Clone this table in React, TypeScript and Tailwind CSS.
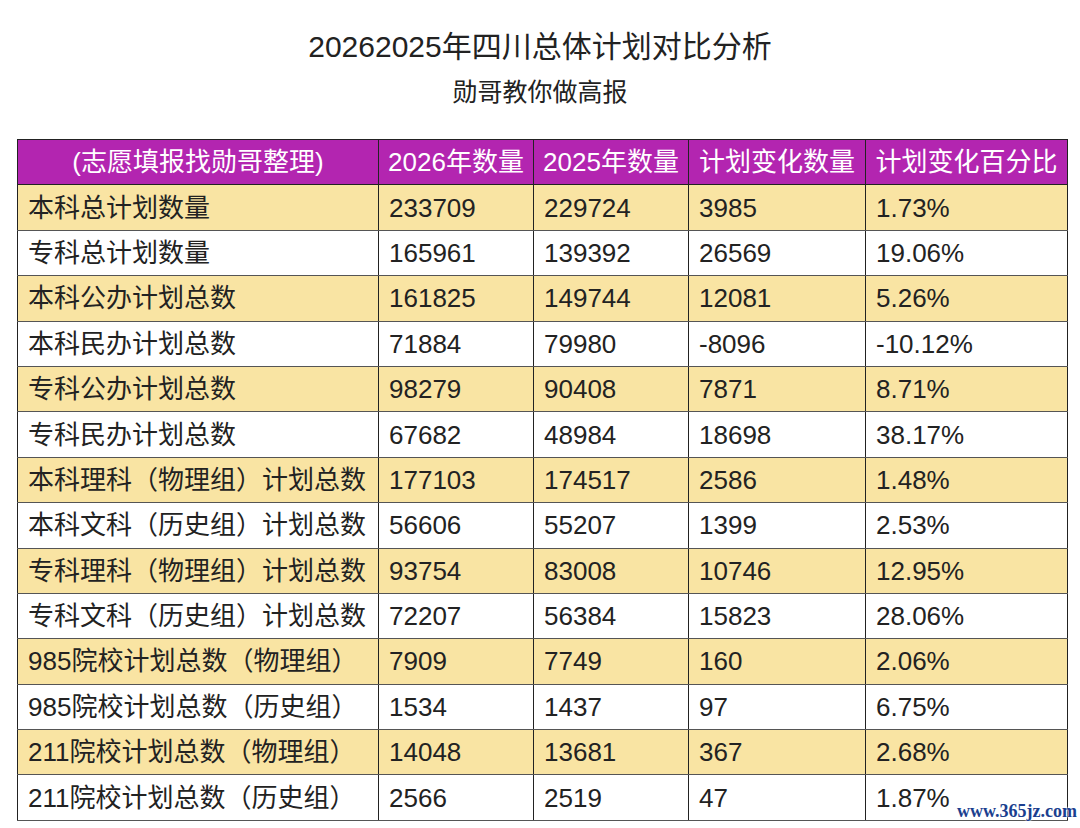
const rows = [
  ["本科总计划数量", "233709", "229724", "3985", "1.73%"],
  ["专科总计划数量", "165961", "139392", "26569", "19.06%"],
  ["本科公办计划总数", "161825", "149744", "12081", "5.26%"],
  ["本科民办计划总数", "71884", "79980", "-8096", "-10.12%"],
  ["专科公办计划总数", "98279", "90408", "7871", "8.71%"],
  ["专科民办计划总数", "67682", "48984", "18698", "38.17%"],
  ["本科理科（物理组）计划总数", "177103", "174517", "2586", "1.48%"],
  ["本科文科（历史组）计划总数", "56606", "55207", "1399", "2.53%"],
  ["专科理科（物理组）计划总数", "93754", "83008", "10746", "12.95%"],
  ["专科文科（历史组）计划总数", "72207", "56384", "15823", "28.06%"],
  ["985院校计划总数（物理组）", "7909", "7749", "160", "2.06%"],
  ["985院校计划总数（历史组）", "1534", "1437", "97", "6.75%"],
  ["211院校计划总数（物理组）", "14048", "13681", "367", "2.68%"],
  ["211院校计划总数（历史组）", "2566", "2519", "47", "1.87%"],
]

const headers = ["(志愿填报找勋哥整理)", "2026年数量", "2025年数量", "计划变化数量", "计划变化百分比"]
const widths = ["w-[361px]", "w-[155px]", "w-[155px]", "w-[177px]", "w-[202px]"]

export default function App() {
  return (
    <div
      className="relative min-h-screen bg-white text-[#222]"
      style={{ fontFamily: '"Liberation Sans", "Noto Sans CJK SC", sans-serif' }}
    >
      <div className="flex flex-col items-center pt-[28px]">
        <h1 className="text-[30px] leading-[38px] font-normal">20262025年四川总体计划对比分析</h1>
        <p className="mt-[10px] text-[25px] leading-[32px]">勋哥教你做高报</p>
      </div>

      <div className="mt-[31px] pl-[17px]">
        <table className="w-[1050px] table-fixed border-collapse border border-[#222] text-[26px]">
          <colgroup>
            {widths.map((w, i) => (
              <col key={i} className={w} />
            ))}
          </colgroup>
          <thead>
            <tr className="h-[45.4px] bg-[#b325b0] text-white">
              {headers.map((h, i) => (
                <th
                  key={i}
                  className="border border-[#222] px-0 text-center font-normal leading-[30px] whitespace-nowrap"
                >
                  {h}
                </th>
              ))}
            </tr>
          </thead>
          <tbody>
            {rows.map((r, ri) => (
              <tr key={ri} className={ri % 2 === 0 ? "h-[45.4px] bg-[#f9e4a3]" : "h-[45.4px] bg-white"}>
                {r.map((c, ci) => (
                  <td
                    key={ci}
                    className="border-x border-x-[#222] border-y border-y-[#555] pl-[10px] leading-[30px] whitespace-nowrap"
                  >
                    {c}
                  </td>
                ))}
              </tr>
            ))}
          </tbody>
        </table>
      </div>

      <div
        className="absolute left-[957px] top-[800px] text-[18px] leading-[22px] font-bold text-[#1b3f8f]"
        style={{ fontFamily: '"Liberation Serif", serif', textShadow: "0 0 2px #fff, 0 0 2px #fff" }}
      >
        www.365jz.com
      </div>
    </div>
  )
}
